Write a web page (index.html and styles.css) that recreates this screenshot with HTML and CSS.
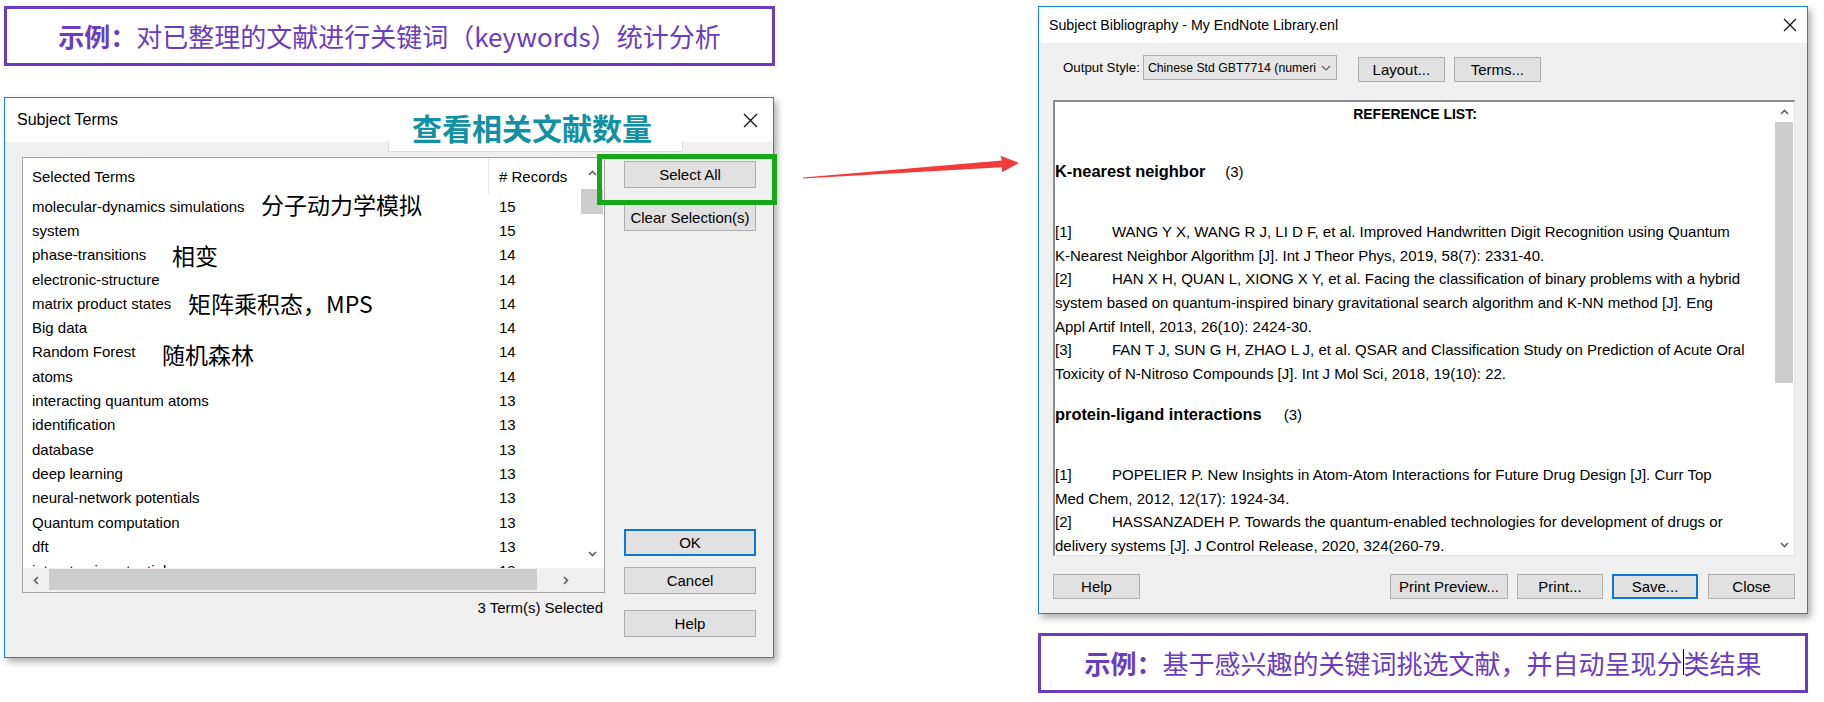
FILE: index.html
```html
<!DOCTYPE html>
<html lang="zh-CN">
<head>
<meta charset="utf-8">
<title>Subject Terms / Subject Bibliography</title>
<link rel="stylesheet" href="styles.css">
</head>
<body>
<div class="canvas">
  <div class="col col-left">
    <div class="note"><b>示例：</b>对已整理的文献进行关键词（keywords）统计分析</div>

    <div class="dlg dlg-terms">
      <div class="titlebar titlebar-tall">
        <span>Subject Terms</span>
        <svg class="close" width="15" height="15" viewBox="0 0 15 15"><path d="M1 1 L14 14 M14 1 L1 14" stroke="#111" stroke-width="1.3" fill="none"/></svg>
      </div>
      <div class="terms-body">
        <div class="list-wrap">
          <div class="listbox">
            <div class="list-main">
              <div class="list-cols">
                <div class="list-head">
                  <div class="c-term">Selected Terms</div>
                  <div class="c-rec c-rec-head"># Records</div>
                </div>
                <div class="row"><div class="c-term">molecular-dynamics simulations</div><div class="c-rec">15</div><span class="cn cn1">分子动力学模拟</span></div>
                <div class="row"><div class="c-term">system</div><div class="c-rec">15</div></div>
                <div class="row"><div class="c-term">phase-transitions</div><div class="c-rec">14</div><span class="cn cn2">相变</span></div>
                <div class="row"><div class="c-term">electronic-structure</div><div class="c-rec">14</div></div>
                <div class="row"><div class="c-term">matrix product states</div><div class="c-rec">14</div><span class="cn cn3">矩阵乘积态，MPS</span></div>
                <div class="row"><div class="c-term">Big data</div><div class="c-rec">14</div></div>
                <div class="row"><div class="c-term">Random Forest</div><div class="c-rec">14</div><span class="cn cn4">随机森林</span></div>
                <div class="row"><div class="c-term">atoms</div><div class="c-rec">14</div></div>
                <div class="row"><div class="c-term">interacting quantum atoms</div><div class="c-rec">13</div></div>
                <div class="row"><div class="c-term">identification</div><div class="c-rec">13</div></div>
                <div class="row"><div class="c-term">database</div><div class="c-rec">13</div></div>
                <div class="row"><div class="c-term">deep learning</div><div class="c-rec">13</div></div>
                <div class="row"><div class="c-term">neural-network potentials</div><div class="c-rec">13</div></div>
                <div class="row"><div class="c-term">Quantum computation</div><div class="c-rec">13</div></div>
                <div class="row"><div class="c-term">dft</div><div class="c-rec">13</div></div>
                <div class="row"><div class="c-term">interatomic potentials</div><div class="c-rec">13</div></div>
              </div>
              <div class="vscroll">
                <div class="sb-btn sb-up"><svg width="9" height="6" viewBox="0 0 9 6"><path d="M1 5 L4.5 1.5 L8 5" stroke="#606060" stroke-width="1.6" fill="none"/></svg></div>
                <div class="sb-thumb"></div>
                <div class="sb-fill"></div>
                <div class="sb-btn sb-down"><svg width="9" height="6" viewBox="0 0 9 6"><path d="M1 1 L4.5 4.5 L8 1" stroke="#606060" stroke-width="1.6" fill="none"/></svg></div>
              </div>
            </div>
            <div class="hscroll">
              <div class="hs-btn hs-left"><svg width="6" height="9" viewBox="0 0 6 9"><path d="M5 1 L1.5 4.5 L5 8" stroke="#606060" stroke-width="1.6" fill="none"/></svg></div>
              <div class="hs-thumb"></div>
              <div class="hs-fill"></div>
              <div class="hs-btn hs-right"><svg width="6" height="9" viewBox="0 0 6 9"><path d="M1 1 L4.5 4.5 L1 8" stroke="#606060" stroke-width="1.6" fill="none"/></svg></div>
              <div class="hs-corner"></div>
            </div>
          </div>
          <div class="status">3 Term(s) Selected</div>
        </div>
        <div class="btn-col">
          <div class="btn">Select All</div>
          <div class="btn btn-clear">Clear Selection(s)</div>
          <div class="btn btn-default btn-ok">OK</div>
          <div class="btn btn-cancel">Cancel</div>
          <div class="btn btn-help">Help</div>
        </div>
      </div>
      <div class="label-box"></div>
      <div class="label-teal">查看相关文献数量</div>
      <div class="green-frame"></div>
    </div>
  </div>

  <div class="col col-right">
    <div class="dlg dlg-bib">
      <div class="titlebar titlebar-short">
        <span>Subject Bibliography - My EndNote Library.enl</span>
        <svg class="close" width="14" height="14" viewBox="0 0 14 14"><path d="M1 1 L13 13 M13 1 L1 13" stroke="#111" stroke-width="1.3" fill="none"/></svg>
      </div>
      <div class="bib-body">
        <div class="toolbar">
          <span class="lbl">Output Style:</span>
          <div class="dropdown"><span class="dd-text">Chinese Std GBT7714 (numeri</span><svg class="dd-chev" width="10" height="6" viewBox="0 0 10 6"><path d="M1 1 L5 5 L9 1" stroke="#606060" stroke-width="1.2" fill="none"/></svg></div>
          <div class="btn btn-sm btn-layout">Layout...</div>
          <div class="btn btn-sm btn-terms">Terms...</div>
        </div>
        <div class="textarea">
          <div class="bib-content">
            <div class="bib-title">REFERENCE LIST:</div>
            <div class="bib-head">K-nearest neighbor<span class="cnt">(3)</span></div>
            <div class="ref-group">
              <div class="ln"><span class="num">[1]</span>WANG Y X, WANG R J, LI D F, et al. Improved Handwritten Digit Recognition using Quantum</div>
              <div class="ln">K-Nearest Neighbor Algorithm [J]. Int J Theor Phys, 2019, 58(7): 2331-40.</div>
              <div class="ln"><span class="num">[2]</span>HAN X H, QUAN L, XIONG X Y, et al. Facing the classification of binary problems with a hybrid</div>
              <div class="ln">system based on quantum-inspired binary gravitational search algorithm and K-NN method [J]. Eng</div>
              <div class="ln">Appl Artif Intell, 2013, 26(10): 2424-30.</div>
              <div class="ln"><span class="num">[3]</span>FAN T J, SUN G H, ZHAO L J, et al. QSAR and Classification Study on Prediction of Acute Oral</div>
              <div class="ln">Toxicity of N-Nitroso Compounds [J]. Int J Mol Sci, 2018, 19(10): 22.</div>
            </div>
            <div class="bib-head bib-head2">protein-ligand interactions<span class="cnt cnt2">(3)</span></div>
            <div class="ref-group">
              <div class="ln"><span class="num">[1]</span>POPELIER P. New Insights in Atom-Atom Interactions for Future Drug Design [J]. Curr Top</div>
              <div class="ln">Med Chem, 2012, 12(17): 1924-34.</div>
              <div class="ln"><span class="num">[2]</span>HASSANZADEH P. Towards the quantum-enabled technologies for development of drugs or</div>
              <div class="ln">delivery systems [J]. J Control Release, 2020, 324(260-79.</div>
            </div>
          </div>
          <div class="vscroll vscroll-bib">
            <div class="sb-btn sb-up2"><svg width="9" height="6" viewBox="0 0 9 6"><path d="M1 5 L4.5 1.5 L8 5" stroke="#606060" stroke-width="1.6" fill="none"/></svg></div>
            <div class="sb-thumb sb-thumb2"></div>
            <div class="sb-fill"></div>
            <div class="sb-btn sb-down2"><svg width="9" height="6" viewBox="0 0 9 6"><path d="M1 1 L4.5 4.5 L8 1" stroke="#606060" stroke-width="1.6" fill="none"/></svg></div>
          </div>
        </div>
        <div class="bottom-bar">
          <div class="btn btn-sm btn-w87">Help</div>
          <div class="spacer"></div>
          <div class="btn btn-sm btn-preview">Print Preview...</div>
          <div class="btn btn-sm btn-w86">Print...</div>
          <div class="btn btn-sm btn-w86 btn-default">Save...</div>
          <div class="btn btn-sm btn-w87 btn-close">Close</div>
        </div>
      </div>
    </div>
    <div class="note note-bottom"><b>示例：</b>基于感兴趣的关键词挑选文献，并自动呈现分<span class="caret"></span>类结果</div>
  </div>

  <svg class="arrow" width="1824" height="702" viewBox="0 0 1824 702">
    <polygon points="803,177.6 1002,160.4 1000.5,155.8 1019,163 1002,172.2 1002,167.2 803,178.6" fill="#f23b3b"/>
  </svg>
</div>
</body>
</html>
```

FILE: styles.css
```css
* { box-sizing: border-box; }
html, body { margin: 0; padding: 0; background: #ffffff; }
body {
  width: 1824px;
  height: 702px;
  overflow: hidden;
  font-family: "Liberation Sans", Arial, sans-serif;
  font-size: 15px;
  color: #000;
}
.canvas {
  position: relative;
  display: flex;
  align-items: flex-start;
  gap: 263px;
  padding: 6px 0 0 4px;
  height: 702px;
}
.col { display: flex; flex-direction: column; }
.col-left { width: 771px; gap: 31px; }
.col-right { width: 770px; gap: 19px; }

/* purple annotation boxes */
.note {
  height: 60px;
  border: 3px solid #6a3cbf;
  display: flex;
  align-items: center;
  justify-content: center;
  font-family: "Noto Sans CJK SC", "Liberation Sans", sans-serif;
  font-size: 26px;
  color: #6a3cbf;
  white-space: nowrap;
  padding-bottom: 2px;
}
.note b { font-weight: 700; }
.caret {
  display: inline-block;
  width: 1px;
  height: 26px;
  background: #000;
  vertical-align: -5px;
}

/* windows */
.dlg {
  position: relative;
  border: 1px solid #1a84d8;
  background: #f0f0f0;
  box-shadow: 3px 4px 7px rgba(0, 0, 0, 0.32);
  display: flex;
  flex-direction: column;
}
.dlg-terms { width: 770px; height: 561px; }
.dlg-bib { width: 770px; height: 608px; }
.titlebar {
  background: #fff;
  display: flex;
  align-items: center;
  justify-content: space-between;
  flex: none;
  white-space: nowrap;
}
.titlebar-tall { height: 44px; padding: 0 15px 0 12px; font-size: 16px; }
.titlebar-short { height: 36px; padding: 0 10px 0 10px; font-size: 14.2px; }
.close { display: block; }

/* buttons */
.btn {
  height: 27px;
  background: #e1e1e1;
  border: 1px solid #adadad;
  display: flex;
  align-items: center;
  justify-content: center;
  white-space: nowrap;
  font-size: 15px;
  flex: none;
}
.btn-default { border: 2px solid #0a78d6; }
.btn-sm { height: 25px; }

/* Subject Terms body */
.terms-body {
  flex: 1;
  display: flex;
  padding: 15px 0 20px 17px;
}
.list-wrap { width: 583px; display: flex; flex-direction: column; }
.listbox {
  height: 436px;
  border: 1px solid #a3a3a3;
  background: #fff;
  display: flex;
  flex-direction: column;
}
.list-main { height: 410px; display: flex; }
.list-cols { flex: 1; overflow: hidden; }
.list-head { height: 36px; display: flex; align-items: stretch; }
.list-head .c-term, .list-head .c-rec { display: flex; align-items: center; }
.c-term { width: 465px; padding-left: 9px; white-space: nowrap; flex: none; }
.c-rec { padding-left: 11px; white-space: nowrap; }
.c-rec-head { border-left: 1px solid #e6e6e6; padding-left: 10px; flex: 1; }
.row {
  position: relative;
  height: 24.3px;
  display: flex;
  align-items: center;
}
.cn {
  position: absolute;
  top: -2px;
  line-height: 28px;
  font-family: "Noto Sans CJK SC", "Liberation Sans", sans-serif;
  font-size: 23px;
  color: #000;
  white-space: nowrap;
}
.cn1 { left: 238px; top: -4px; }
.cn2 { left: 149px; }
.cn3 { left: 165px; }
.cn4 { left: 139px; top: 0px; }

.vscroll {
  width: 24px;
  flex: none;
  display: flex;
  flex-direction: column;
  background: #fff;
}
.sb-btn { display: flex; align-items: center; justify-content: center; flex: none; }
.sb-up { height: 30px; }
.sb-down { height: 28px; }
.sb-thumb { height: 25px; margin: 1px 1px 0 1px; background: #cdcdcd; flex: none; }
.sb-fill { flex: 1; }

.hscroll { height: 24px; display: flex; background: #f0f0f0; }
.hs-btn { display: flex; align-items: center; justify-content: center; flex: none; }
.hs-left { width: 26px; }
.hs-thumb { width: 488px; margin: 1px 0 2px 0; background: #cdcdcd; flex: none; }
.hs-fill { flex: 1; }
.hs-right { width: 29px; }
.hs-corner { width: 24px; flex: none; }

.status {
  margin-top: 7px;
  line-height: 16px;
  text-align: right;
  padding-right: 2px;
}
.btn-col {
  width: 132px;
  margin: 4px 0 0 19px;
  display: flex;
  flex-direction: column;
}
.btn-clear { margin-top: 16px; }
.btn-ok { margin-top: auto; }
.btn-cancel { margin-top: 11px; }
.btn-help { margin-top: 16px; }

/* overlays on the Subject Terms window */
.label-box {
  position: absolute;
  left: 383px;
  top: 43px;
  width: 295px;
  height: 11px;
  background: #fff;
  border: 1px solid #d9d9d9;
  border-top: none;
}
.label-teal {
  position: absolute;
  left: 407px;
  top: 14px;
  line-height: 30px;
  font-family: "Noto Sans CJK SC", "Liberation Sans", sans-serif;
  font-weight: 700;
  font-size: 30px;
  color: #1390a3;
  white-space: nowrap;
}
.green-frame {
  position: absolute;
  left: 592px;
  top: 56px;
  width: 180px;
  height: 51px;
  border: 5px solid #17a817;
}

/* Subject Bibliography body */
.bib-body {
  flex: 1;
  display: flex;
  flex-direction: column;
  padding: 12px 12px 14px 14px;
}
.toolbar { height: 27px; display: flex; align-items: flex-start; flex: none; }
.lbl {
  padding-left: 10px;
  margin-right: 3px;
  line-height: 25px;
  font-size: 13.3px;
  white-space: nowrap;
}
.dropdown {
  width: 194px;
  height: 25px;
  background: #e6e6e6;
  border: 1px solid #acacac;
  display: flex;
  align-items: center;
  padding-left: 4px;
  font-size: 12.3px;
}
.dd-text { flex: 1; white-space: nowrap; }
.dd-chev { flex: none; margin: 0 5px 0 2px; }
.btn-layout { width: 87px; margin: 2px 0 0 21px; }
.btn-terms { width: 87px; margin: 2px 0 0 9px; }

.textarea {
  margin-top: 18px;
  height: 456px;
  flex: none;
  background: #fff;
  border-top: 2px solid #8c8c8c;
  border-left: 2px solid #8c8c8c;
  border-right: 1px solid #e3e3e3;
  border-bottom: 1px solid #e3e3e3;
  display: flex;
}
.bib-content { flex: 1; overflow: hidden; white-space: nowrap; }
.bib-title { line-height: 24px; text-align: center; font-weight: 700; font-size: 14px; }
.bib-head { margin-top: 33px; line-height: 24px; font-weight: 700; font-size: 16.4px; }
.bib-head2 { margin-top: 16px; }
.cnt { font-weight: 400; font-size: 15px; margin-left: 20px; }
.cnt2 { margin-left: 22px; }
.ref-group { margin-top: 36px; }
.ln { line-height: 23.7px; height: 23.7px; }
.num { display: inline-block; width: 57px; }
.vscroll-bib { width: 19px; }
.sb-up2 { height: 20px; }
.sb-thumb2 { height: 261px; margin: 0 1px 0 0; }
.sb-down2 { height: 20px; }

.bottom-bar { margin-top: 18px; display: flex; flex: none; }
.spacer { flex: 1; }
.btn-w87 { width: 87px; }
.btn-w86 { width: 86px; margin-left: 9px; }
.btn-preview { width: 118px; }
.btn-close { margin-left: 10px; }

.arrow { position: absolute; left: 0; top: 0; pointer-events: none; }
```
